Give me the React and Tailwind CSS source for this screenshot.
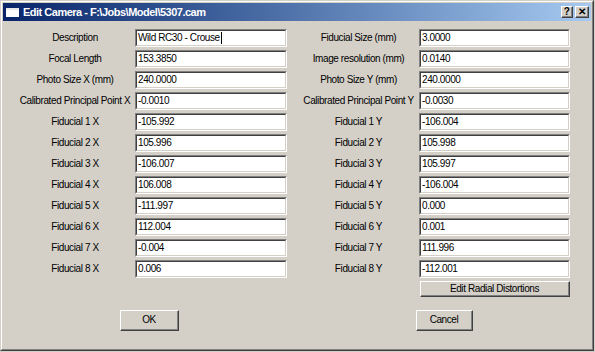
import React from "react";

const leftRows = [
    ["Description", "Wild RC30 - Crouse"],
    ["Focal Length", "153.3850"],
    ["Photo Size X (mm)", "240.0000"],
    ["Calibrated Principal Point X", "-0.0010"],
    ["Fiducial 1 X", "-105.992"],
    ["Fiducial 2 X", "105.996"],
    ["Fiducial 3 X", "-106.007"],
    ["Fiducial 4 X", "106.008"],
    ["Fiducial 5 X", "-111.997"],
    ["Fiducial 6 X", "112.004"],
    ["Fiducial 7 X", "-0.004"],
    ["Fiducial 8 X", "0.006"],
];

const rightRows = [
    ["Fiducial Size (mm)", "3.0000"],
    ["Image resolution (mm)", "0.0140"],
    ["Photo Size Y (mm)", "240.0000"],
    ["Calibrated Principal Point Y", "-0.0030"],
    ["Fiducial 1 Y", "-106.004"],
    ["Fiducial 2 Y", "105.998"],
    ["Fiducial 3 Y", "105.997"],
    ["Fiducial 4 Y", "-106.004"],
    ["Fiducial 5 Y", "0.000"],
    ["Fiducial 6 Y", "0.001"],
    ["Fiducial 7 Y", "111.996"],
    ["Fiducial 8 Y", "-112.001"],
];

const Field = ({ value, width, caret }) => (
    <div
        className={`${width} h-[18px] border-t border-l border-t-[#808080] border-l-[#808080] border-r border-b border-r-white border-b-white`}
    >
        <div className="h-full border-t border-l border-t-[#404040] border-l-[#404040] border-r border-b border-r-[#d4d0c8] border-b-[#d4d0c8] bg-white flex items-center pl-[1px] text-[10px] tracking-[-0.4px] leading-none text-black whitespace-nowrap">
            {value}
            {caret && <span className="w-px h-[12px] bg-black ml-px" />}
        </div>
    </div>
);

const Row = ({ label, value, labelW, fieldW, caret }) => (
    <div className="flex items-center h-[18px] mb-[3px]">
        <div className={`${labelW} text-center text-[10px] tracking-[-0.4px] leading-none text-black whitespace-nowrap`}>
            {label}
        </div>
        <Field value={value} width={fieldW} caret={caret} />
    </div>
);

const Button = ({ children, className }) => (
    <div
        className={`${className} border-t border-l border-t-white border-l-white border-r border-b border-r-[#404040] border-b-[#404040] bg-[#d4d0c8]`}
    >
        <div className="h-full border-r border-b border-r-[#808080] border-b-[#808080] flex items-center justify-center text-[10px] tracking-[-0.4px] leading-none text-black">
            {children}
        </div>
    </div>
);

const App = () => {
    return (
        <div className="w-[595px] h-[352px] bg-[#d4d0c8] font-['Liberation_Sans',Arial,sans-serif]">
            <div className="w-[594px] h-[351px] border-t border-l border-t-[#d4d0c8] border-l-[#d4d0c8] border-r border-b border-r-[#404040] border-b-[#404040]">
                <div className="h-full border-t border-l border-t-white border-l-white border-r border-b border-r-[#808080] border-b-[#808080] p-px">
                    {/* title bar */}
                    <div className="h-[18px] flex items-center bg-gradient-to-r from-[#0a246a] to-[#a6caf0] pl-[3px] pr-[2px]">
                        <div className="w-[13px] h-[9px] bg-white border-t-2 border-[#e8e8e8] mr-[4px]" />
                        <div className="text-white font-bold text-[11px] tracking-[-0.5px] leading-none whitespace-nowrap">
                            Edit Camera - F:\Jobs\Model\5307.cam
                        </div>
                        <div className="ml-auto flex gap-[2px]">
                            <Button className="w-[12px] h-[12px]">
                                <span className="font-bold text-[10px]">?</span>
                            </Button>
                            <Button className="w-[14px] h-[12px]">
                                <span className="font-bold text-[10px]">✕</span>
                            </Button>
                        </div>
                    </div>

                    <div className="flex pt-[8px] pl-[12px]">
                        <div className="flex flex-col">
                            {leftRows.map(([label, value], i) => (
                                <Row
                                    key={label}
                                    label={label}
                                    value={value}
                                    labelW="w-[120px]"
                                    fieldW="w-[152px]"
                                    caret={i === 0}
                                />
                            ))}
                        </div>
                        <div className="flex flex-col ml-[11px]">
                            {rightRows.map(([label, value]) => (
                                <Row
                                    key={label}
                                    label={label}
                                    value={value}
                                    labelW="w-[121px]"
                                    fieldW="w-[151px]"
                                />
                            ))}
                            <div className="flex">
                                <div className="w-[122px]" />
                                <Button className="w-[150px] h-[16px]">
                                    Edit Radial Distortions
                                </Button>
                            </div>
                        </div>
                    </div>

                    <div className="flex mt-[13px]">
                        <Button className="w-[59px] h-[21px] ml-[117px]">OK</Button>
                        <Button className="w-[57px] h-[21px] ml-[237px]">Cancel</Button>
                    </div>
                </div>
            </div>
        </div>
    );
};

export default App;
